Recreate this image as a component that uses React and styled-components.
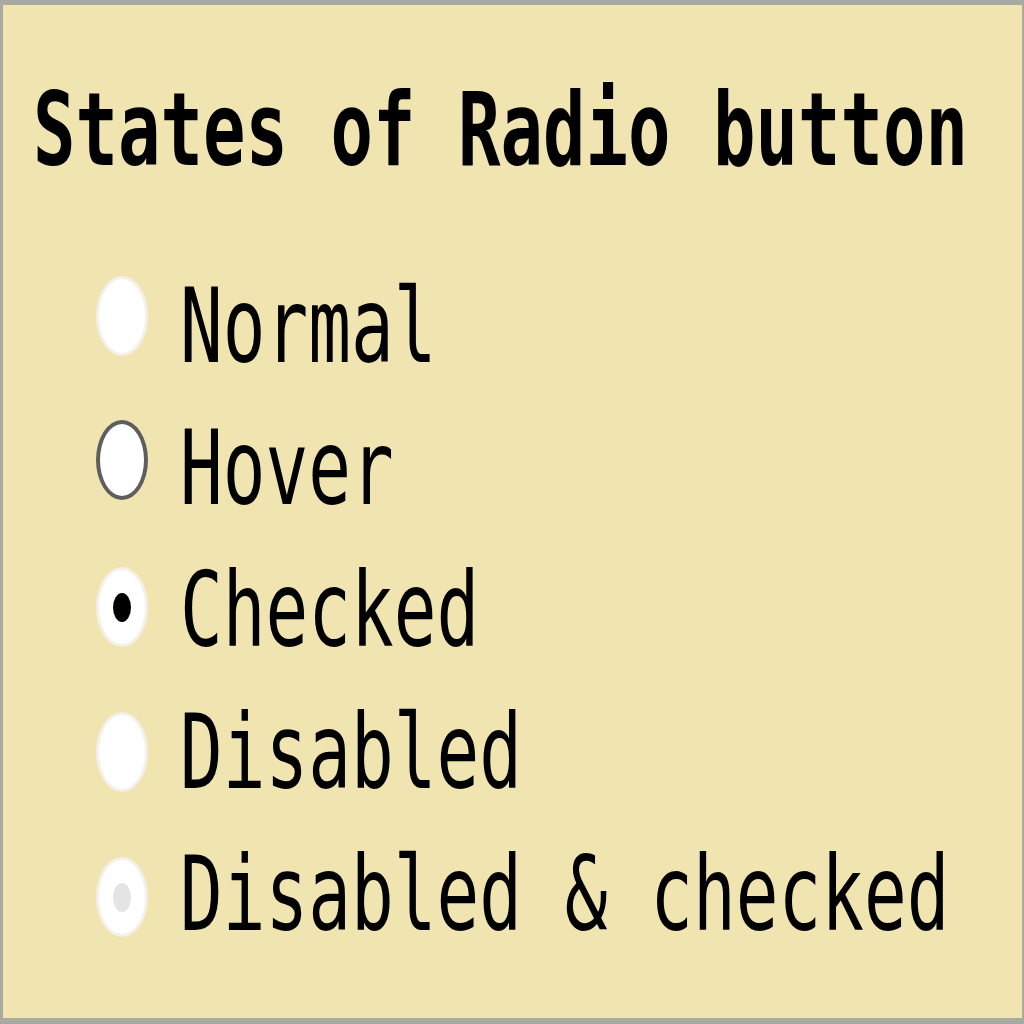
import React from 'react';
import styled, { createGlobalStyle } from 'styled-components';

// --- Global ---
const GlobalStyle = createGlobalStyle`
  html, body { margin: 0; padding: 0; background: #f0e5b1; }
  * { box-sizing: border-box; }
`;

// --- Styled ---
const Card = styled.div`
  width: 1024px; height: 1024px;
  background: #f0e5b1;
  border-style: solid; border-color: #a9a9a4;
  border-width: 5px 2px 6px 3px;
  padding: 52px 0 0 30px;
  font-family: "DejaVu Sans Mono", "Liberation Mono", monospace;
  color: #000;
`;
const HeadingRow = styled.div` height: 142px; display: flex; align-items: center; `;
const Heading = styled.h1`
  margin: 0; font-size: 70.6px; line-height: 71px; font-weight: bold;
  transform: scaleY(1.45); transform-origin: center 33px;
`;
const List = styled.div` margin-top: 55px; padding-left: 63px; display: flex; flex-direction: column; `;
const Row = styled.label` height: 142px; display: flex; align-items: center; gap: 32px; `;
const Radio = styled.input.attrs({ type: 'radio' })`
  appearance: none; -webkit-appearance: none;
  margin: 0; margin-top: ${p => p.$shift || 0}px;
  width: 52px; height: 80px; border-radius: 50%;
  background: #fff;
  border: ${p => p.$hover ? '4px solid #5e5e5e' : '3px solid #f3f1ea'};
  display: grid; place-items: center;
  &:checked::after {
    content: ''; width: 18px; height: 29px; border-radius: 50%;
    background: ${p => p.disabled ? '#e4e4e4' : '#000'};
  }
`;
const Label = styled.span`
  display: inline-block; font-size: 71px; line-height: 71px;
  transform: scaleY(1.45); transform-origin: center 33px;
`;

const states = [
  { label: 'Normal', shift: -18 },
  { label: 'Hover', hover: true, shift: -14 },
  { label: 'Checked', checked: true, shift: -4 },
  { label: 'Disabled', disabled: true, shift: 2 },
  { label: 'Disabled & checked', disabled: true, checked: true, shift: 8 },
];

export default function App() {
  return (
    <>
      <GlobalStyle />
      <Card>
        <HeadingRow><Heading>States of Radio button</Heading></HeadingRow>
        <List>
          {states.map((s, i) => (
            <Row key={s.label}>
              <Radio name={`state-${i}`} $hover={s.hover} $shift={s.shift}
                checked={!!s.checked} disabled={!!s.disabled} readOnly />
              <Label>{s.label}</Label>
            </Row>
          ))}
        </List>
      </Card>
    </>
  );
}
